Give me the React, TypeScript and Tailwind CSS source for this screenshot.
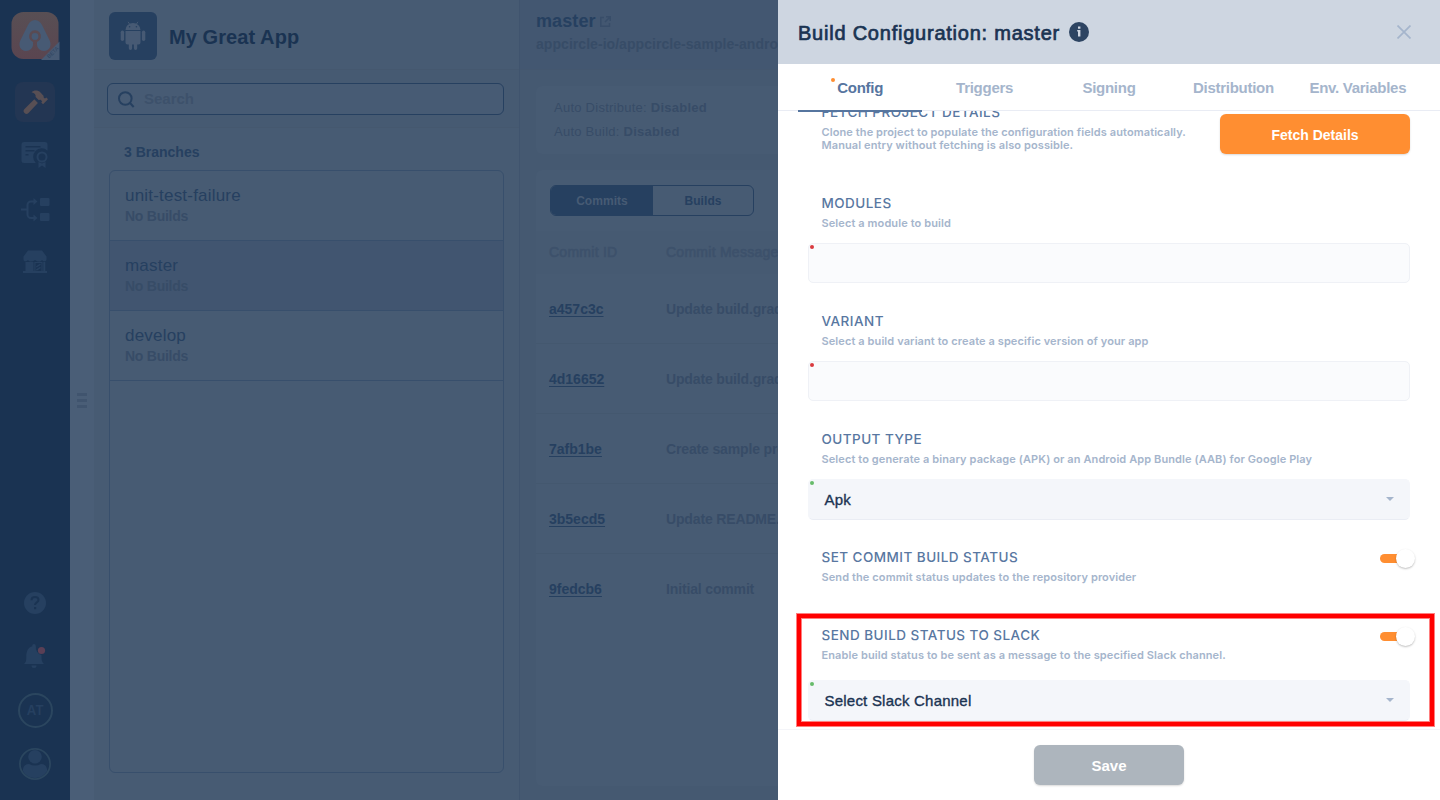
import React from "react";

const commits = [
  ["a457c3c", "Update build.gradle"],
  ["4d16652", "Update build.gradle"],
  ["7afb1be", "Create sample project"],
  ["3b5ecd5", "Update README.md"],
  ["9fedcb6", "Initial commit"],
];
const branches = ["unit-test-failure", "master", "develop"];
const tabs = ["Config", "Triggers", "Signing", "Distribution", "Env. Variables"];

function Sidebar() {
  return (
    <nav className="flex h-full w-[70px] shrink-0 flex-col items-center bg-[#1a3352]">
      <svg className="mt-3 ml-px shrink-0" width="49" height="48" viewBox="0 0 49 48">
        <defs>
          <linearGradient id="lg" x1="0" y1="0" x2="0" y2="1">
            <stop offset="0" stopColor="#584f54" />
            <stop offset="1" stopColor="#5a4550" />
          </linearGradient>
        </defs>
        <rect x="0.5" width="47" height="47" rx="12" fill="url(#lg)" />
        <path d="M24 8c-3.400 0-5.500 2.200-7 5L9.300 28.500C7 33.500 9.500 39 15 39c4 0 7-3 7-6.500v-2.600a6 6 0 1 1 4 0v2.600c0 3.500 3 6.500 7 6.500 5.500 0 8-5.500 5.700-10.500L31 13c-1.500-2.800-3.600-5-7-5z" fill="#475a74" />
        <circle cx="24" cy="24.500" r="3.400" fill="#475a74" />
        <path d="M30 48 48.500 29.500V48z" fill="#475a74" />
        <text x="0" y="0" transform="translate(38 46.500) rotate(-43)" fontSize="5.500" fontFamily="Liberation Sans" fill="#2d435f">BETA</text>
      </svg>
      <div className="mt-[22px] flex size-10 shrink-0 items-center justify-center rounded-lg bg-[#233653]">
        <svg width="26" height="26" viewBox="0 0 26 26" fill="#584f54">
          <path d="M9.500 3.200C12 1 16 1 18.500 3.500l3 3.200.3 2 1.200.9 1.400-1L26 10.200l-5 5-1.700-1.700.8-1.200-1.500-1.500-2 .2-3-3c.6-2.200-1-4-4.100-4.800z" />
          <path d="m12.300 10.300 3.600 3.600L6.500 24a2.800 2.800 0 0 1-4-4z" />
        </svg>
      </div>
      <svg className="mt-[19px] shrink-0" width="28" height="28" viewBox="0 0 28 28">
        <path d="M3 1h21a2.500 2.500 0 0 1 2.500 2.500v6.200A7.500 7.500 0 0 0 14.800 22H3A2.500 2.500 0 0 1 .5 19.500v-16A2.500 2.500 0 0 1 3 1z" fill="#264060" />
        <path d="M4.500 5.700h15M4.500 9.800h9M4.500 13.700h3" stroke="#1a3352" strokeWidth="1.600" />
        <circle cx="21" cy="16" r="4.500" fill="none" stroke="#264060" strokeWidth="2" />
        <path d="M17.500 21v6l3.500-2.500 3.500 2.500v-6L21 22.500z" fill="#264060" />
      </svg>
      <svg className="mt-7 shrink-0" width="30" height="26" viewBox="0 0 30 26">
        <path d="M1 12.500h7M15 4.500h-4A3.500 3.500 0 0 0 7.500 8v9.500A3.500 3.500 0 0 0 11 21h4" fill="none" stroke="#264060" strokeWidth="2" />
        <path d="m13.500 1 4 3.500-4 3.500zM13.500 17.500l4 3.500-4 3.500z" fill="#264060" />
        <rect x="20" y="1" width="9.500" height="8" rx="1" fill="#264060" />
        <rect x="20" y="16" width="9.500" height="8" rx="1" fill="#264060" />
      </svg>
      <svg className="mt-[26px] shrink-0" width="26" height="26" viewBox="0 0 26 26" fill="#264060">
        <path d="M6 1.500h14l4.500 6v3c0 2-3 2.500-4.500.5-1.500 2-4.500 2-7 0-2.500 2-5.500 2-7 0-1.500 2-4.500 1.500-4.500-.5v-3z" />
        <path d="M3.500 13h8V22h.8v-9h8.200v9h.8v-9h2v9H25v2H1v-2h2.500z" />
        <path d="M13.500 14h6v8h-6z" fill="#1a3352" />
        <path d="m14.300 18 4.200-2.800M14.300 21.200l4.200-2.800" stroke="#264060" strokeWidth="1.500" />
      </svg>
      <div className="mt-auto flex flex-col items-center pb-5">
        <div className="flex size-[22px] items-center justify-center rounded-full bg-[#264060]">
          <svg width="10" height="14" viewBox="0 0 10 14" fill="none">
            <path d="M1.500 4.200C1.500 0 8.500.2 8.500 4c0 2.500-3.500 2.300-3.500 5" stroke="#1a3352" strokeWidth="2" />
            <rect x="4" y="11" width="2.200" height="2.200" fill="#1a3352" />
          </svg>
        </div>
        <svg className="mt-[29px]" width="24" height="26" viewBox="0 0 24 26" fill="#264060">
          <path d="M1 21c2-2 2.300-3 2.300-7.500C3.300 7.500 6 4 9.200 3.300c0-3 3.600-3 3.600 0A8 8 0 0 0 18.500 12c0 6 .5 7 2.500 9z" />
          <path d="M8.500 22.500h5a2.500 2.500 0 0 1-5 0z" />
          <circle cx="18.500" cy="7.500" r="3.600" fill="#5a3f55" />
        </svg>
        <div className="mt-6 ml-px flex size-[35px] items-center justify-center rounded-full border-2 border-[#2b465f] font-['Inter',sans-serif] text-[13px] font-semibold tracking-[0.3px] text-[#264060]">AT</div>
        <svg className="mt-5" width="32" height="32" viewBox="0 0 32 32">
          <defs><clipPath id="av"><circle cx="16" cy="16" r="14" /></clipPath></defs>
          <circle cx="16" cy="8.800" r="6.800" fill="#264060" />
          <path clipPath="url(#av)" d="M4 32V21q1-5 6-5 6 3 12 0 5 0 6 5v11z" fill="#264060" />
          <circle cx="16" cy="16" r="15.100" fill="none" stroke="#2b465f" strokeWidth="1.800" />
        </svg>
      </div>
    </nav>
  );
}

function AndroidIcon() {
  return (
    <svg className="mt-px" width="26" height="30" viewBox="0 0 26 30" fill="#475a74">
      <path d="M5.500 9a7.500 7 0 0 1 15 0z" />
      <path d="m8 .8 1.800 2.600M18 .8l-1.800 2.600" stroke="#475a74" strokeWidth=".9" />
      <circle cx="9.600" cy="5.800" r=".8" fill="#264060" />
      <circle cx="16.400" cy="5.800" r=".8" fill="#264060" />
      <path d="M5.500 10h15v11.500a2 2 0 0 1-2 2h-1.300v3.800a1.600 1.600 0 0 1-3.300 0v-3.800h-1.800v3.800a1.600 1.600 0 0 1-3.300 0v-3.800H7.500a2 2 0 0 1-2-2z" />
      <rect x=".7" y="9.500" width="3.400" height="10.500" rx="1.700" />
      <rect x="21.900" y="9.500" width="3.400" height="10.500" rx="1.700" />
    </svg>
  );
}

function BranchList() {
  return (
    <section className="flex h-full w-[425px] shrink-0 flex-col bg-[#475b73]">
      <header className="flex h-[70px] shrink-0 items-center border-b border-[#45586f] pt-[2px] pl-[15px]">
        <div className="flex size-12 items-center justify-center rounded-md bg-[#264060]"><AndroidIcon /></div>
        <h1 className="ml-3 pt-[3px] text-[20px] font-bold tracking-[0.08px] text-[#1a3352]">My Great App</h1>
      </header>
      <div className="flex h-[58px] shrink-0 border-b border-[#45586f] bg-[#465a72] px-[13px] pt-[13px]">
        <div className="flex h-8 w-[397px] items-center rounded-md border border-[#264060] bg-[#475b74] pl-[10px]">
          <svg width="17" height="17" viewBox="0 0 17 17" fill="none" stroke="#264060" strokeWidth="2"><circle cx="7.300" cy="7.500" r="6.300" /><path d="m12 12 3.700 4" /></svg>
          <span className="ml-[9px] text-[15px] font-bold text-[#3d516b]">Search</span>
        </div>
      </div>
      <h2 className="mt-[14px] ml-[30px] text-[14px] leading-5 font-bold text-[#264060]">3 Branches</h2>
      <div className="mt-2 ml-[15px] h-[603px] w-[395px] shrink-0 overflow-hidden rounded-md border border-[#384f6c]">
        {branches.map((b, i) => (
          <div key={b} className={`flex h-[70px] flex-col border-b border-[#384f6c] pt-[14px] pl-[15px] ${i === 1 ? "bg-[#415570]" : ""}`}>
            <span className="text-[17px] leading-[22px] tracking-[0.2px] text-[#264060]">{b}</span>
            <span className="text-[14px] leading-[19px] font-bold tracking-[-0.25px] text-[#374c67]">No Builds</span>
          </div>
        ))}
      </div>
    </section>
  );
}

function CommitArea() {
  return (
    <section className="flex h-full w-[259px] shrink-0 flex-col overflow-hidden border-l border-[#40546e] bg-[#455971] whitespace-nowrap">
      <header className="h-[70px] shrink-0 border-b border-[#44576f] bg-[#435771] pt-[9px] pl-4">
        <div className="flex items-center gap-1">
          <h2 className="text-[18px] leading-[25px] font-bold tracking-[0.1px] text-[#264060]">master</h2>
          <svg width="11" height="11" viewBox="0 0 11 11" fill="none" stroke="#384d69" strokeWidth="1.500"><path d="M4 1.500H.8v8.700h8.700V7M6 .8h4.200V5M10 1 5 6" /></svg>
        </div>
        <p className="text-[14px] leading-5 font-bold tracking-[0.05px] text-[#374c67]">appcircle-io/appcircle-sample-android</p>
      </header>
      <div className="mt-4 ml-4 h-[68px] shrink-0 rounded-l-md bg-[#475b73] pt-[10px] pl-[18px] text-[13px] leading-6 tracking-[0.25px] text-[#374c67]">
        <p>Auto Distribute: <b>Disabled</b></p>
        <p>Auto Build: <b>Disabled</b></p>
      </div>
      <div className="mt-4 ml-4 h-[616px] shrink-0 rounded-l-md bg-[#475b73]">
        <div className="mt-[15px] ml-[14px] flex h-[31px] w-[204px] overflow-hidden rounded-md border border-[#264060] text-[12px] font-bold tracking-[0.05px]">
          <div className="flex w-[102px] items-center justify-center bg-[#264060] text-[#475b74]">Commits</div>
          <div className="flex flex-1 items-center justify-center text-[#264060]">Builds</div>
        </div>
        <div className="mt-[15px] flex h-[43px] items-center bg-[#465a72] pl-[13px] text-[14px] tracking-[0.26px] text-[#3d516b] [-webkit-text-stroke:0.6px]">
          <span className="w-[117px] shrink-0">Commit ID</span><span>Commit Message</span>
        </div>
        {commits.map(([id, m]) => (
          <div key={id} className="flex h-[70px] items-center border-b border-[#44586f] pt-px pl-[13px] text-[14px] font-bold last:border-transparent">
            <span className="w-[117px] shrink-0 text-[#264060] underline underline-offset-2">{id}</span>
            <span className="tracking-[-0.15px] text-[#374c67]">{m}</span>
          </div>
        ))}
      </div>
    </section>
  );
}

function Heading({ title, desc }: { title: string; desc: React.ReactNode }) {
  return (
    <div className="pl-[13.500px] font-['Inter',sans-serif]">
      <h3 className="text-[13.500px] leading-5 font-medium tracking-[0.46px] text-[#5877a1]">{title}</h3>
      <p className="pt-1 text-[11px] leading-[13px] font-semibold tracking-[0.1px] text-[#a5b5cc]">{desc}</p>
    </div>
  );
}

function Field({ value }: { value?: string }) {
  return (
    <div className={`relative flex w-[602px] items-center rounded-[5px] border pr-[15px] pl-[15.500px] ${value ? "h-[41px] border-[#f4f6fa] border-b-[#eaedf4] bg-[#f4f6fa]" : "h-10 border-[#eff1f6] bg-[#fafbfd]"}`}>
      <i className={`absolute top-[1px] left-[1px] size-1 rounded-full ${value ? "bg-[#66bb6a]" : "bg-[#d93a3f]"}`} />
      {value && (
        <>
          <span className="flex-1 pt-[2px] text-[15px] tracking-[0.22px] text-[#1a3352] [-webkit-text-stroke:0.35px]">{value}</span>
          <i className="mb-px border-x-4 border-t-4 border-x-transparent border-t-[#a5b5cc]" />
        </>
      )}
    </div>
  );
}

function Toggle() {
  return (
    <div className="flex h-5 w-[35px] items-center">
      <div className="h-[9px] w-[17px] rounded-l-full bg-[#ff8e31]" />
      <div className="-ml-px size-[19px] rounded-full bg-white shadow-[0_1px_2px_rgba(0,0,0,0.25)]" />
    </div>
  );
}

function ConfigPanel() {
  return (
    <aside className="flex h-full w-[662px] shrink-0 flex-col bg-white">
      <header className="flex h-16 shrink-0 items-center bg-[#ced6e1] pt-[2px] pl-5">
        <h2 className="text-[20px] tracking-[0.77px] text-[#1a3352] [-webkit-text-stroke:0.7px]">Build Configuration: master</h2>
        <svg className="-mt-[2px] ml-[9px]" width="20" height="20" viewBox="0 0 20 20"><circle cx="10" cy="10" r="10" fill="#2d4462" /><path d="M9 4.500h2.400v2.200H9zM8.200 8h3.200v6.500H9V9.500h-.8z" fill="#cfd6e1" /></svg>
        <svg className="-mt-[2px] mr-[29px] ml-auto" width="14" height="14" viewBox="0 0 14 14" stroke="#a5b5cc" strokeWidth="1.700"><path d="m.5.500 13 13M13.500.5l-13 13" /></svg>
      </header>
      <div className="relative z-10 h-[47px] shrink-0 border-b border-[#e9ecf4] px-5">
        <div className="flex h-12">
          {tabs.map((t, i) => (
            <div key={t} className={`relative flex flex-1 items-center justify-center text-[15px] font-bold tracking-[-0.27px] ${i === 0 ? "border-b-2 border-[#56759f] text-[#56759f]" : "border-b-2 border-transparent text-[#a5b5cc]"}`}>
              <span className="pt-[2px]">{t}</span>
              {i === 0 && <i className="absolute top-[14px] left-[33px] size-1 rounded-full bg-[#ff8e31]" />}
            </div>
          ))}
        </div>
      </div>
      <main className="h-[618px] shrink-0 overflow-hidden pl-[30px]">
        <div className="-mt-[9px] flex h-[91px] items-start justify-between pr-[30px]">
          <Heading title="FETCH PROJECT DETAILS" desc={<>Clone the project to populate the configuration fields automatically.<br />Manual entry without fetching is also possible.</>} />
          <div className="mt-3 flex h-10 w-[190px] items-center justify-center rounded-md bg-[#ff8e31] pt-[2px] text-[14px] font-bold text-white shadow-[0_1px_2px_rgba(0,0,0,0.15)]">Fetch Details</div>
        </div>
        <div className="flex h-[118px] flex-col gap-[13px]"><Heading title="MODULES" desc="Select a module to build" /><Field /></div>
        <div className="flex h-[118px] flex-col gap-[13px]"><Heading title="VARIANT" desc="Select a build variant to create a specific version of your app" /><Field /></div>
        <div className="flex h-[118px] flex-col gap-[13px]"><Heading title="OUTPUT TYPE" desc="Select to generate a binary package (APK) or an Android App Bundle (AAB) for Google Play" /><Field value="Apk" /></div>
        <div className="flex h-[78px] justify-between pr-[25px]">
          <Heading title="SET COMMIT BUILD STATUS" desc="Send the commit status updates to the repository provider" />
          <div className="pt-px"><Toggle /></div>
        </div>
        <div className="relative flex flex-col">
          <div className="flex h-[55px] justify-between pr-[25px]">
            <Heading title="SEND BUILD STATUS TO SLACK" desc="Enable build status to be sent as a message to the specified Slack channel." />
            <div className="pt-px"><Toggle /></div>
          </div>
          <Field value="Select Slack Channel" />
          <div className="absolute -top-3 -left-3 h-[114px] w-[639px] border border-[#ff000080]">
            <div className="h-full border-4 border-[#ff0000] shadow-[inset_0_0_0_1px_#ff000080]" />
          </div>
        </div>
      </main>
      <footer className="flex flex-1 justify-center border-t border-[#f4f5f9] pt-[15px]">
        <div className="flex h-10 w-[150px] items-center justify-center rounded-md bg-[#adb5bd] pt-[2px] text-[15px] font-bold text-white shadow-[0_1px_2px_rgba(0,0,0,0.15)]">Save</div>
      </footer>
    </aside>
  );
}

export default function App() {
  return (
    <div className="flex h-[800px] w-[1440px] overflow-hidden bg-[#475b74] font-['Liberation_Sans',Arial,sans-serif]">
      <Sidebar />
      <div className="flex w-6 shrink-0 flex-col items-center justify-center gap-[3px] bg-[#4a5e77]">
        <i className="h-[3px] w-[10px] bg-[#40546e]" />
        <i className="h-[3px] w-[10px] bg-[#40546e]" />
        <i className="h-[3px] w-[10px] bg-[#40546e]" />
      </div>
      <BranchList />
      <CommitArea />
      <ConfigPanel />
    </div>
  );
}
